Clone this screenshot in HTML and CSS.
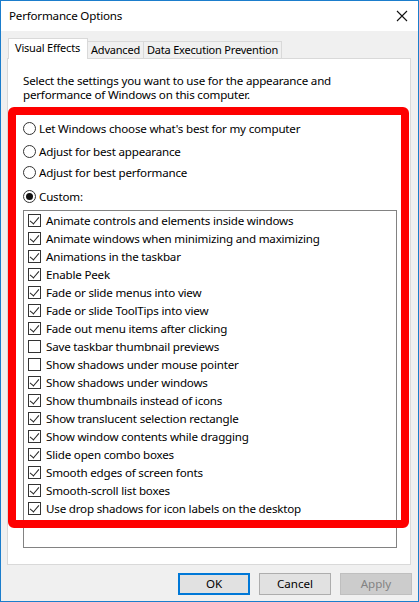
FILE: index.html
```html
<!DOCTYPE html>
<html>
<head>
<meta charset="utf-8">
<link rel="stylesheet" href="styles.css">
</head>
<body>
<div class="window">
  <div class="titlebar">
    <span class="title">Performance Options</span>
    <svg class="close" width="12" height="12" viewBox="0 0 12 12"><path d="M1 1 L11 11 M11 1 L1 11" stroke="#111" stroke-width="1.1" fill="none"/></svg>
  </div>
  <div class="body">
    <div class="tabs">
      <div class="tab active">Visual Effects</div>
      <div class="tab">Advanced</div>
      <div class="tab">Data Execution Prevention</div>
    </div>
    <div class="panel">
      <p class="desc">Select the settings you want to use for the appearance and<br>performance of Windows on this computer.</p>
      <div class="radios">
        <label class="radio r1"><span class="rb"></span>Let Windows choose what's best for my computer</label>
        <label class="radio r2"><span class="rb"></span>Adjust for best appearance</label>
        <label class="radio r3"><span class="rb"></span>Adjust for best performance</label>
        <label class="radio r4"><span class="rb on"></span>Custom:</label>
      </div>
      <div class="listbox">
        <div class="item"><span class="cb on"></span>Animate controls and elements inside windows</div>
        <div class="item"><span class="cb on"></span>Animate windows when minimizing and maximizing</div>
        <div class="item"><span class="cb on"></span>Animations in the taskbar</div>
        <div class="item"><span class="cb on"></span>Enable Peek</div>
        <div class="item"><span class="cb on"></span>Fade or slide menus into view</div>
        <div class="item"><span class="cb on"></span>Fade or slide ToolTips into view</div>
        <div class="item"><span class="cb on"></span>Fade out menu items after clicking</div>
        <div class="item"><span class="cb"></span>Save taskbar thumbnail previews</div>
        <div class="item"><span class="cb"></span>Show shadows under mouse pointer</div>
        <div class="item"><span class="cb on"></span>Show shadows under windows</div>
        <div class="item"><span class="cb on"></span>Show thumbnails instead of icons</div>
        <div class="item"><span class="cb on"></span>Show translucent selection rectangle</div>
        <div class="item"><span class="cb on"></span>Show window contents while dragging</div>
        <div class="item"><span class="cb on"></span>Slide open combo boxes</div>
        <div class="item"><span class="cb on"></span>Smooth edges of screen fonts</div>
        <div class="item"><span class="cb on"></span>Smooth-scroll list boxes</div>
        <div class="item"><span class="cb on"></span>Use drop shadows for icon labels on the desktop</div>
      </div>
    </div>
    <div class="buttons">
      <div class="btn default">OK</div>
      <div class="btn">Cancel</div>
      <div class="btn disabled">Apply</div>
    </div>
  </div>
  <div class="highlight"></div>
</div>
</body>
</html>
```
FILE: styles.css
```css
* { box-sizing: border-box; }
html, body { margin: 0; padding: 0; background: #fff; }
body {
  font-family: "Segoe UI", "Noto Sans", "Liberation Sans", sans-serif;
  font-size: 11.6px;
  letter-spacing: -0.2px;
  color: #000;
}
.window {
  position: relative;
  width: 419px;
  height: 602px;
  border: 1px solid #1b7dcc;
  background: #f0f0f0;
  display: flex;
  flex-direction: column;
}
.titlebar {
  height: 30px;
  background: #fff;
  display: flex;
  align-items: center;
  justify-content: space-between;
  padding: 0 10px 0 8px;
}
.title { line-height: 14px; }
.close { display: block; }
.body {
  flex: 1;
  padding: 7px 0 0 6px;
  display: flex;
  flex-direction: column;
}
.tabs {
  display: flex;
  align-items: flex-end;
  height: 20px;
  margin-left: 1px;
  position: relative;
  z-index: 1;
}
.tab {
  height: 17px;
  border: 1px solid #d9d9d9;
  border-bottom: none;
  background: #f0f0f0;
  padding: 0 3px;
  line-height: 16px;
  margin-left: -1px;
  font-size: 11px;
}
.tab.active {
  height: 21px;
  background: #fff;
  padding: 0 7px 0 6px;
  line-height: 17px;
  margin-left: 0;
  margin-bottom: -1px;
}
.panel {
  width: 404px;
  height: 507px;
  background: #fff;
  border: 1px solid #d9d9d9;
  padding: 15px 15px 0 15px;
}
.desc {
  margin: 0;
  line-height: 14px;
}
.radios {
  margin-top: 20px;
  display: flex;
  flex-direction: column;
}
.radio {
  display: flex;
  align-items: center;
  height: 14px;
  gap: 3px;
}
.r1 { margin-top: -1px; }
.r2 { margin-top: 9px; }
.r3 { margin-top: 7px; }
.r4 { margin-top: 10px; }
.rb {
  width: 13px;
  height: 13px;
  border: 1px solid #333;
  border-radius: 50%;
  background: #fff;
  display: flex;
  align-items: center;
  justify-content: center;
  flex: none;
}
.rb.on::after {
  content: "";
  width: 7px;
  height: 7px;
  border-radius: 50%;
  background: #111;
}
.listbox {
  margin-top: 7px;
  width: 374px;
  height: 338px;
  border: 1px solid #828282;
  padding: 0 0 0 4px;
}
.item {
  height: 18px;
  display: flex;
  align-items: center;
  gap: 5px;
}
.cb {
  width: 13px;
  height: 13px;
  border: 1px solid #333;
  background: #fff;
  flex: none;
  position: relative;
}
.cb.on::after {
  content: "";
  position: absolute;
  left: 3px;
  top: 0px;
  width: 4px;
  height: 8px;
  border-right: 1px solid #222;
  border-bottom: 1px solid #222;
  transform: rotate(40deg);
}
.buttons {
  display: flex;
  justify-content: flex-end;
  gap: 9px;
  padding: 8px 6px 0 0;
}
.btn {
  width: 72px;
  height: 22px;
  border: 1px solid #adadad;
  background: #e1e1e1;
  text-align: center;
  line-height: 20px;
  letter-spacing: 0;
}
.btn.default {
  border: 2px solid #0078d7;
  line-height: 18px;
}
.btn.disabled {
  border-color: #bfbfbf;
  background: #cccccc;
  color: #838383;
}
.highlight {
  position: absolute;
  left: 7px;
  top: 106px;
  width: 401px;
  height: 421px;
  border: 8px solid #fe0000;
  border-radius: 6px;
  pointer-events: none;
}
```
